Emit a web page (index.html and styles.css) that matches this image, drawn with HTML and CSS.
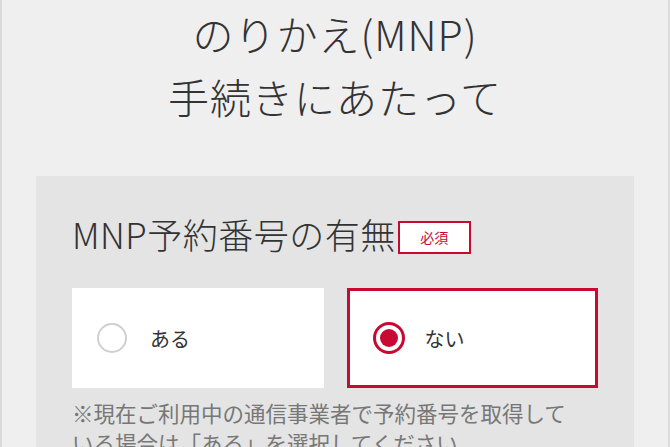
FILE: index.html
```html
<!DOCTYPE html>
<html lang="ja">
<head>
<meta charset="utf-8">
<link rel="stylesheet" href="styles.css">
</head>
<body>
<div class="page">
  <h1 class="title">のりかえ(MNP)<br>手続きにあたって</h1>
  <section class="panel">
    <h2 class="heading">MNP予約番号の有無<span class="badge">必須</span></h2>
    <div class="options">
      <label class="option"><span class="radio"></span><span class="label">ある</span></label>
      <label class="option is-checked"><span class="radio"></span><span class="label">ない</span></label>
    </div>
    <p class="note">※現在ご利用中の通信事業者で予約番号を取得している場合は「ある」を選択してください。</p>
  </section>
</div>
</body>
</html>
```
FILE: styles.css
```css
html, body {
  margin: 0;
  padding: 0;
  background: #efefef;
}
body {
  font-family: "Noto Sans CJK JP", "Noto Sans", sans-serif;
  color: #333;
  overflow: hidden;
}
.page {
  height: 447px;
  border-left: 2px solid #dadada;
  border-right: 2px solid #dadada;
  box-sizing: border-box;
}
.title {
  margin: 0;
  padding-top: 2px;
  font-size: 41px;
  line-height: 63px;
  font-weight: 300;
  letter-spacing: 1px;
  text-align: center;
  color: #333;
}
.panel {
  margin: 48px 34px 0;
  background: #e4e4e4;
  padding: 36px 36px 0;
  height: 400px;
}
.heading {
  margin: 0;
  font-size: 35px;
  line-height: 44px;
  font-weight: 300;
  letter-spacing: 0.5px;
  display: flex;
  align-items: center;
  color: #333;
}
.badge {
  display: inline-flex;
  align-items: center;
  justify-content: center;
  width: 73px;
  height: 33px;
  box-sizing: border-box;
  border: 2px solid #c80a32;
  background: #fff;
  color: #c80a32;
  font-size: 14px;
  font-weight: 400;
  letter-spacing: 0;
  line-height: 1;
  margin-left: 2px;
  margin-top: 6px;
}
.options {
  margin-top: 32px;
  display: grid;
  grid-template-columns: 1fr 1fr;
  gap: 23px;
}
.option {
  height: 100px;
  box-sizing: border-box;
  background: #fff;
  border: 3px solid #fff;
  display: flex;
  align-items: center;
  padding-left: 22px;
}
.option.is-checked {
  border-color: #c80a32;
  padding-left: 23px;
}
.radio {
  width: 30px;
  height: 30px;
  box-sizing: border-box;
  border: 2px solid #cfcfcf;
  border-radius: 50%;
  position: relative;
  flex: none;
}
.is-checked .radio {
  width: 32px;
  height: 32px;
  border: 3px solid #c80a32;
}
.is-checked .radio::after {
  content: "";
  position: absolute;
  left: 4px;
  top: 4px;
  width: 18px;
  height: 18px;
  border-radius: 50%;
  background: #c80a32;
}
.label {
  font-size: 20px;
  margin-left: 23px;
  color: #333;
}
.is-checked .label {
  margin-left: 20px;
}
.note {
  margin: 10px 0 0;
  font-size: 21.5px;
  line-height: 30px;
  word-break: break-all;
  max-width: 515px;
  color: #777;
}
```
